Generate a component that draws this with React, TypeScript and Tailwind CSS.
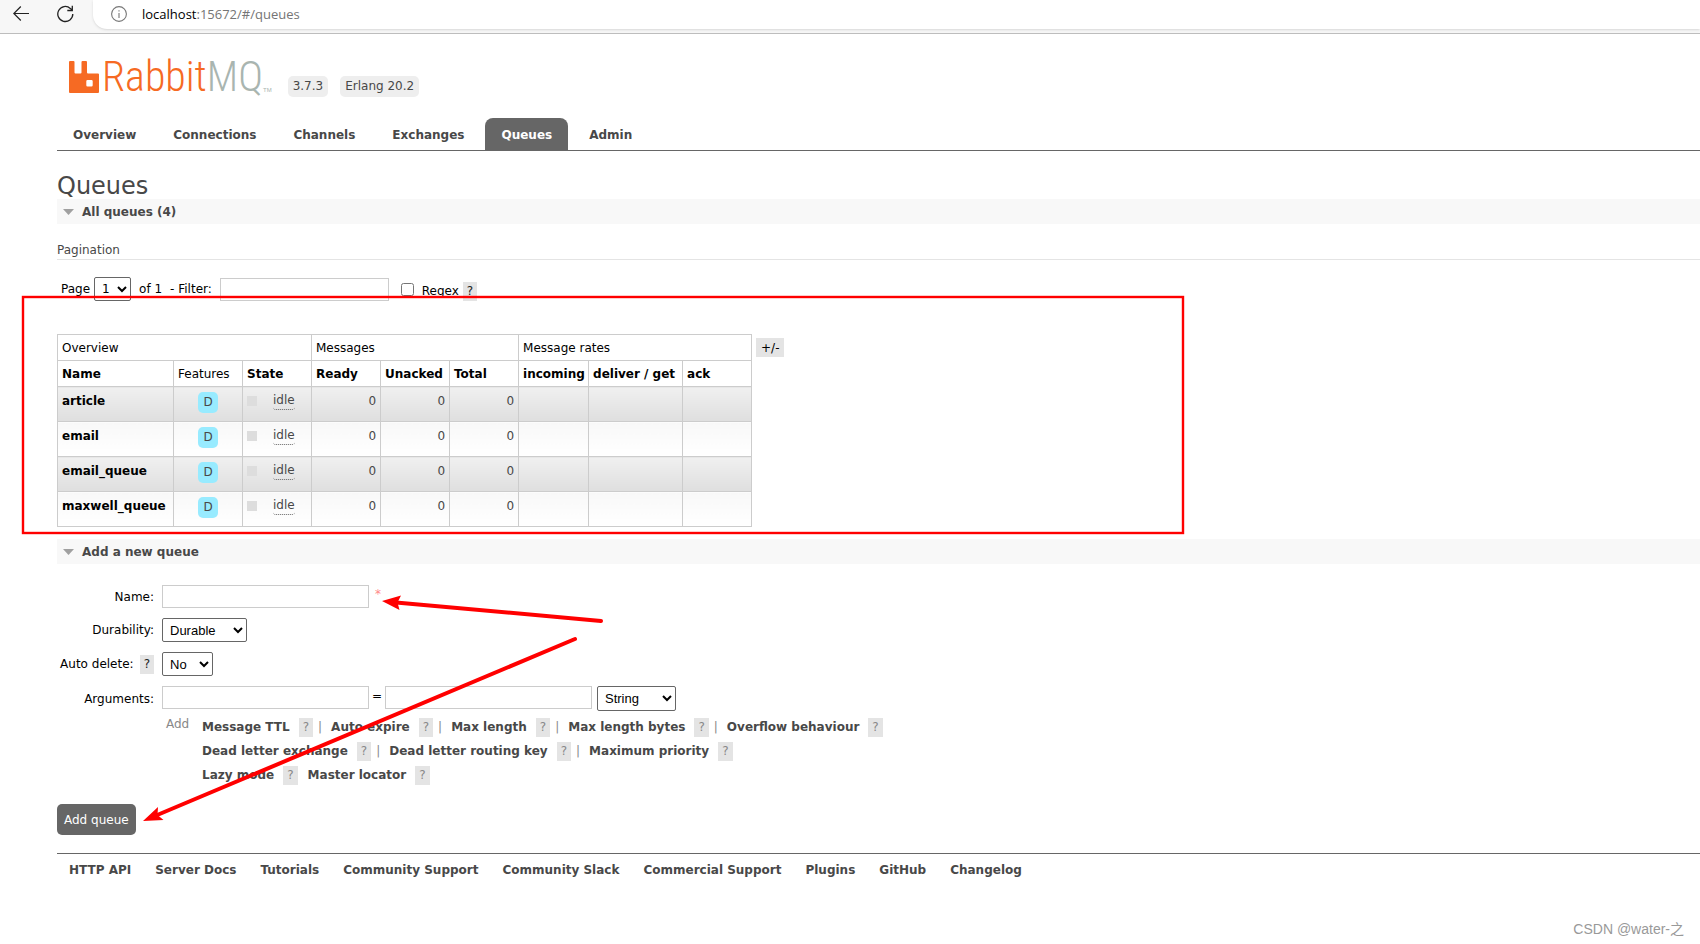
import { clsx } from "clsx";
import { Fragment, useState, type ReactNode } from "react";

const tabs = ["Overview", "Connections", "Channels", "Exchanges", "Queues", "Admin"];

const queues = ["article", "email", "email_queue", "maxwell_queue"];

const argumentLinks = [
  ["Message TTL", "Auto expire", "Max length", "Max length bytes", "Overflow behaviour"],
  ["Dead letter exchange", "Dead letter routing key", "Maximum priority"],
];

const footerLinks = [
  "HTTP API",
  "Server Docs",
  "Tutorials",
  "Community Support",
  "Community Slack",
  "Commercial Support",
  "Plugins",
  "GitHub",
  "Changelog",
];

const inputClass = "h-[23px] border border-[#ccc] bg-white px-1 outline-none";
const selectClass = "rounded-xs border border-[#666] bg-white pl-[3px] text-black";

function BrowserBar() {
  return (
    <div className="flex h-[34px] items-start border-b border-[#bdbdbd] bg-[#f7f7f7]">
      <button aria-label="Back" className="ml-[13px] mt-[5px]">
        <svg width="16" height="18" viewBox="0 0 16 18" fill="none" stroke="#222" strokeWidth="1.2">
          <path d="M16 8.500H1M7.800 1.500L.8 8.500L7.800 15.500" />
        </svg>
      </button>
      <button aria-label="Reload" className="ml-7 mt-[5px]">
        <svg width="17" height="18" viewBox="0 0 17 18" fill="none" stroke="#222" strokeWidth="1.3">
          <path d="M15.800 9A7.500 7.500 0 1 1 13.300 3.400L15.300 5.300M15.300 .8V5.500H10.300" />
        </svg>
      </button>
      <div className="ml-[19px] flex h-[29px] flex-1 items-center rounded-bl-[14px] bg-white pb-0.5 pl-[18px] shadow-sm">
        <svg width="16" height="16" viewBox="0 0 16 16" fill="none" stroke="#777" strokeWidth="1.1">
          <circle cx="8" cy="8" r="7.4" />
          <path d="M8 7V12M8 4.2V5.6" />
        </svg>
        <span className="ml-[15px] font-['Open_Sans',sans-serif] text-[13px] text-[#757575]">
          <span className="text-black">localhost</span>:15672/#/queues
        </span>
      </div>
    </div>
  );
}

function Logo() {
  return (
    <a href="#" aria-label="RabbitMQ" className="flex h-[38px] items-start">
      <svg width="30" height="34" viewBox="0 0 30 34" className="shrink-0">
        <path
          fill="#f66a23"
          fillRule="evenodd"
          d="M0 3Q0 2 1 2H4.500Q5.500 2 5.500 3V13.500Q5.500 14.500 6.500 14.500H11.500Q12.500 14.500 12.500 13.500V3Q12.500 2 13.500 2H17Q18 2 18 3V13.500Q18 14.500 19 14.500H29Q30 14.500 30 15.500V33Q30 34 29 34H1Q0 34 0 33ZM18.500 21Q17.300 21 17.300 22.200V26.300Q17.300 27.500 18.500 27.500H22.500Q23.700 27.500 23.700 26.300V22.200Q23.700 21 22.500 21Z"
        />
      </svg>
      <span className="ml-[3px] font-['Roboto_Condensed','Liberation_Sans_Narrow',sans-serif] text-[42px] leading-[36px] font-light text-[#f66a23]">
        Rabbit<span className="text-[#a9b5b0]">MQ</span>
      </span>
      <span className="mt-[27px] font-['Liberation_Sans',sans-serif] text-[6px] leading-[8px] text-[#a9b5b0]">TM</span>
    </a>
  );
}

function Help({ muted = false }: { muted?: boolean }) {
  return (
    <a
      href="#"
      className={clsx(
        "inline-block h-[19px] bg-[#e4e4e4] px-1 leading-[19px]",
        muted ? "text-[#888]" : "text-[#222]",
      )}
    >
      ?
    </a>
  );
}

function SectionTitle({ children }: { children: ReactNode }) {
  return (
    <h2 className="flex h-[25px] items-center bg-[#f8f8f8] pl-1.5 font-bold">
      <svg width="11" height="6" viewBox="0 0 11 6" className="mr-2">
        <path d="M0 0H11L5.500 6Z" fill="#a0a0a0" />
      </svg>
      {children}
    </h2>
  );
}

function Pagination() {
  const [filter, setFilter] = useState("");
  const [regex, setRegex] = useState(false);

  return (
    <div className="mt-[17px] flex h-6 items-center pl-1 text-black">
      <label htmlFor="page" className="mr-1">Page</label>
      <select id="page" className={clsx(selectClass, "h-6 w-[37px]")}>
        <option>1</option>
      </select>
      <span className="ml-2">of 1</span>
      <label htmlFor="filter" className="mr-2 ml-2">- Filter:</label>
      <input
        id="filter"
        value={filter}
        onChange={(e) => setFilter(e.target.value)}
        className={clsx(inputClass, "w-[169px]")}
      />
      <input
        id="regex"
        type="checkbox"
        checked={regex}
        onChange={(e) => setRegex(e.target.checked)}
        className="ml-3 size-[13px]"
      />
      <label htmlFor="regex" className="mr-1 ml-2 pt-1">Regex</label>
      <span className="pt-1">
        <Help />
      </span>
    </div>
  );
}

function QueueTable() {
  return (
    <div className="mt-[33px] flex items-start">
      <table className="w-[695px] table-fixed border-collapse text-black [&_td]:border [&_td]:border-[#ccc] [&_td]:px-1 [&_th]:border [&_th]:border-[#ccc] [&_th]:px-1 [&_th]:text-left">
        <colgroup>
          <col className="w-[116px]" />
          <col className="w-[69px]" />
          <col className="w-[69px]" />
          <col className="w-[69px]" />
          <col className="w-[69px]" />
          <col className="w-[69px]" />
          <col className="w-[70px]" />
          <col className="w-[94px]" />
          <col className="w-[69px]" />
        </colgroup>
        <thead>
          <tr className="h-[26px]">
            <th colSpan={3} className="font-normal">Overview</th>
            <th colSpan={3} className="font-normal">Messages</th>
            <th colSpan={3} className="font-normal">Message rates</th>
          </tr>
          <tr className="h-[26px] whitespace-nowrap">
            <th>Name</th>
            <th className="font-normal">Features</th>
            <th>State</th>
            <th>Ready</th>
            <th>Unacked</th>
            <th>Total</th>
            <th>incoming</th>
            <th>deliver / get</th>
            <th>ack</th>
          </tr>
        </thead>
        <tbody>
          {queues.map((name) => (
            <tr
              key={name}
              className="h-[35px] align-top text-[#484848] odd:[&>td]:bg-linear-to-b [&>td]:pt-[5px] [&>td]:leading-[18px] odd:[&>td]:from-[#f0f0f0] odd:[&>td]:to-[#dfdfdf] even:[&>td]:bg-linear-to-b even:[&>td]:from-[#f8f8f8] even:[&>td]:to-white"
            >
              <td>
                <a href="#" className="font-bold text-black">{name}</a>
              </td>
              <td className="text-center">
                <span className="inline-block h-[21px] rounded-[5px] bg-[#98ebff] px-[5px] leading-[21px]">D</span>
              </td>
              <td>
                <div className="flex h-[18px] items-center">
                  <span className="size-2.5 bg-[#ddd]" />
                  <span className="ml-4 rounded-[3px] border-b border-dotted border-[#666] leading-[17px]">idle</span>
                </div>
              </td>
              <td className="text-right">0</td>
              <td className="text-right">0</td>
              <td className="text-right">0</td>
              <td />
              <td />
              <td />
            </tr>
          ))}
        </tbody>
      </table>
      <button className="mt-1 ml-1 h-[19px] bg-[#e4e4e4] px-[5px] text-black">+/-</button>
    </div>
  );
}

function ArgumentLink({ text }: { text: string }) {
  return (
    <>
      <a href="#" className="mr-[9px] font-bold">{text}</a>
      <Help muted />
    </>
  );
}

function AddQueueForm() {
  const [name, setName] = useState("");
  const [key, setKey] = useState("");
  const [value, setValue] = useState("");

  return (
    <form className="mt-[21px]" onSubmit={(e) => e.preventDefault()}>
      <div className="grid grid-cols-[97px_1fr] items-center gap-x-2 gap-y-2.5 text-black">
        <label htmlFor="name" className="text-right">Name:</label>
        <div className="flex">
          <input id="name" value={name} onChange={(e) => setName(e.target.value)} className={clsx(inputClass, "w-[207px]")} />
          <span className="ml-1.5 text-[#f88]">*</span>
        </div>

        <label htmlFor="durability" className="text-right">Durability:</label>
        <div className="flex">
          <select id="durability" className={clsx(selectClass, "h-6 w-[85px] font-['Liberation_Sans',sans-serif] text-[13px]")}>
            <option>Durable</option>
            <option>Transient</option>
          </select>
        </div>

        <div className="flex items-center justify-end gap-1.5 whitespace-nowrap">
          <label htmlFor="auto-delete">Auto delete:</label>
          <Help />
        </div>
        <div className="flex">
          <select id="auto-delete" className={clsx(selectClass, "h-6 w-[51px] font-['Liberation_Sans',sans-serif] text-[13px]")}>
            <option>No</option>
            <option>Yes</option>
          </select>
        </div>

        <label htmlFor="arg-key" className="text-right">Arguments:</label>
        <div className="flex">
          <input id="arg-key" value={key} onChange={(e) => setKey(e.target.value)} className={clsx(inputClass, "w-[207px]")} />
          <span className="w-4 text-center leading-[20px]">=</span>
          <input aria-label="Argument value" value={value} onChange={(e) => setValue(e.target.value)} className={clsx(inputClass, "w-[207px]")} />
          <select aria-label="Argument type" className={clsx(selectClass, "ml-[5px] h-[25px] w-[79px] font-['Liberation_Sans',sans-serif] text-[13px]")}>
            <option>String</option>
            <option>Number</option>
            <option>Boolean</option>
            <option>List</option>
          </select>
        </div>
      </div>

      <div className="mt-1 flex pl-[109px] text-[#888]">
        <span className="w-9 leading-[18px]">Add</span>
        <div>
          {argumentLinks.map((row) => (
            <div key={row[0]} className="flex h-6 items-center text-[#484848]">
              {row.map((text, i) => (
                <Fragment key={text}>
                  {i > 0 && <span className="ml-[5px] mr-[9px] text-[#888]">|</span>}
                  <ArgumentLink text={text} />
                </Fragment>
              ))}
            </div>
          ))}
          <div className="flex h-6 items-center text-[#484848]">
            <ArgumentLink text="Lazy mode" />
            <span className="w-2.5" />
            <ArgumentLink text="Master locator" />
          </div>
        </div>
      </div>

      <button type="submit" className="mt-[17px] h-[31px] rounded-[5px] bg-[#666] px-[7px] text-white">
        Add queue
      </button>
    </form>
  );
}

function Annotations() {
  return (
    <svg className="pointer-events-none absolute top-0 left-0" width="1200" height="850" fill="none" stroke="#f00">
      <rect x="23" y="297" width="1160" height="236" strokeWidth="2.400" />
      <g strokeWidth="4" strokeLinecap="round">
        <path d="M396 602.500L601 621" />
        <path d="M156 815.500L575 639" />
      </g>
      <g fill="#f00" stroke="none">
        <path d="M382 601L401 595.500L397.500 602.500L399.500 610Z" />
        <path d="M143 821L158 807L157.500 815L163.500 820Z" />
      </g>
    </svg>
  );
}

export default function App() {
  return (
    <div className="relative min-h-screen bg-white font-['DejaVu_Sans',Verdana,sans-serif] text-[12px] leading-[18px] text-[#484848]">
      <BrowserBar />
      <div className="pl-[57px]">
        <header className="flex items-end pt-[25px] pb-[21px] pl-3">
          <Logo />
          <span className="ml-4 h-[21px] rounded-[5px] bg-[#eee] px-[5px] leading-[21px]">3.7.3</span>
          <span className="ml-3 h-[21px] rounded-[5px] bg-[#eee] px-[5px] leading-[21px]">Erlang 20.2</span>
        </header>
        <nav className="flex gap-[5px] border-b border-[#666]">
          {tabs.map((tab) => (
            <a
              key={tab}
              href="#"
              className={clsx(
                "h-8 rounded-t-lg px-4 leading-[34px] font-bold",
                tab === "Queues" && "bg-[#666] text-white",
              )}
            >
              {tab}
            </a>
          ))}
        </nav>

        <main>
          <h1 className="mt-[22px] text-[24px] leading-[26px]">Queues</h1>
          <SectionTitle>All queues (4)</SectionTitle>
          <h3 className="mt-[17px] border-b border-[#e4e4e4]">Pagination</h3>
          <Pagination />
          <QueueTable />
          <div className="mt-3">
            <SectionTitle>Add a new queue</SectionTitle>
            <AddQueueForm />
          </div>
        </main>

        <footer className="mt-[18px] flex gap-6 border-t border-[#666] pt-[7px] pl-3 font-bold">
          {footerLinks.map((link) => (
            <a key={link} href="#">{link}</a>
          ))}
        </footer>
      </div>
      <Annotations />
      <span className="absolute right-4 bottom-1.5 font-['Liberation_Sans','Noto_Sans_CJK_SC',sans-serif] text-[14px] text-[#999]">
        CSDN @water-之
      </span>
    </div>
  );
}
